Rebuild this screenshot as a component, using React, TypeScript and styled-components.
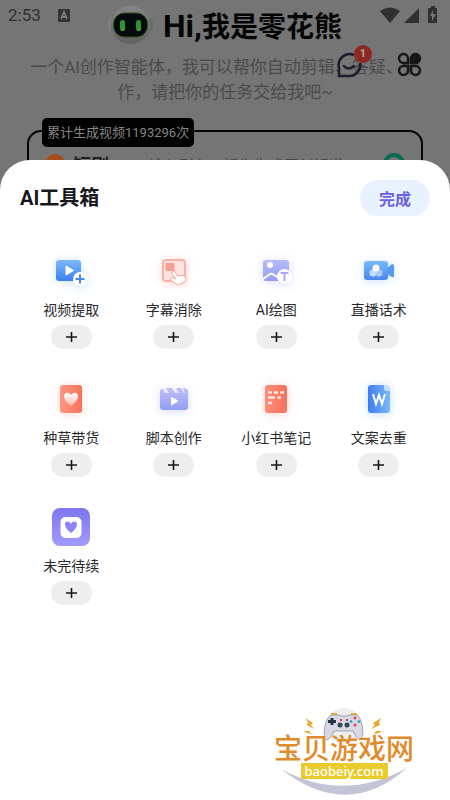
import React from 'react';
import styled, { createGlobalStyle } from 'styled-components';

const sans = '"Noto Sans CJK SC", sans-serif';
const latin = `Roboto, ${sans}`;

const GlobalStyle = createGlobalStyle`
  *, *::before, *::after { box-sizing: border-box; }
  body { margin: 0; background: #757575; font-family: ${latin}; }
  h1, h2, p, ul { margin: 0; padding: 0; }
  button { border: 0; padding: 0; font-family: inherit; cursor: pointer; }
  svg { display: block; overflow: visible; }
`;

const Screen = styled.div`
  position: relative;
  display: flex;
  flex-direction: column;
  min-height: 100vh;
  overflow: hidden;
`;

const Backdrop = styled.header`
  position: relative;
  height: 160px;
`;

const StatusBar = styled.div`
  position: absolute;
  inset: 0 8px auto 8px;
  display: flex;
  align-items: center;
  height: 30px;
  gap: 17px;
  color: #303030;
  font-size: 17px;
`;

const StatusIcons = styled.div`
  display: flex;
  align-items: center;
  gap: 4px;
  margin-left: auto;
`;

const Hero = styled.div`
  display: flex;
  justify-content: center;
  align-items: center;
  gap: 10px;
  height: 50px;
`;

const HeroTitle = styled.h1`
  color: #050505;
  font-family: ${sans};
  font-size: 28px;
  line-height: 40px;
  font-weight: 700;
`;

const HeroGreeting = styled.span`
  font-family: Roboto, sans-serif;
  font-size: 32px;
`;

const Intro = styled.p`
  padding: 5px 28px 0;
  color: #4b4b4b;
  font-size: 17px;
  line-height: 25px;
  text-align: center;
`;

const QuickActions = styled.nav`
  position: absolute;
  top: 50px;
  right: 27px;
  display: flex;
  gap: 33px;
`;

const QuickButton = styled.button`
  position: relative;
  width: 27px;
  height: 28px;
  background: none;
`;

const Badge = styled.span`
  position: absolute;
  top: -5px;
  right: -9px;
  width: 18px;
  height: 18px;
  border-radius: 50%;
  background: #8f2722;
  color: #aaa;
  font-size: 11px;
  line-height: 18px;
  font-weight: 700;
`;

const PromptCard = styled.section`
  margin: 25px 27px 0;
  height: 60px;
  border: 2px solid #050505;
  border-radius: 14px;
`;

const Counter = styled.span`
  display: block;
  width: fit-content;
  margin: -14px 0 0 13px;
  padding: 0 5px;
  border-radius: 5px;
  background: #020202;
  color: #858585;
  font-size: 13px;
  line-height: 29px;
`;

const PromptRow = styled.div`
  display: flex;
  align-items: center;
  height: 32px;
  margin: 1px 16px 0;
  color: #202020;
  font-size: 18px;
  font-weight: 700;
`;

const PromptHint = styled.span`
  margin: 0 auto;
  color: #484848;
  font-size: 15px;
  font-weight: 400;
`;

const PromptName = styled.span`
  margin-left: 8px;
`;

const Sheet = styled.main`
  position: relative;
  flex: 1;
  border-radius: 30px 30px 0 0;
  background: #fff;
`;

const SheetHeader = styled.div`
  display: flex;
  justify-content: space-between;
  align-items: center;
  padding: 20px 20px 0;
`;

const SheetTitle = styled.h2`
  color: #17171d;
  font-size: 20px;
  line-height: 28px;
  font-weight: 700;
`;

const DoneButton = styled.button`
  width: 70px;
  height: 36px;
  border-radius: 18px;
  background: #e8f2ff;
  color: #6a61dc;
  font-size: 16px;
  font-weight: 700;
`;

const ToolGrid = styled.ul`
  display: grid;
  grid-template-columns: repeat(4, 1fr);
  row-gap: 16px;
  padding: 33px 20px 0;
  list-style: none;
`;

const ToolItem = styled.li`
  display: flex;
  flex-direction: column;
  align-items: center;
  height: 112px;
`;

const ToolLabel = styled.span`
  margin-top: 5px;
  color: #29292c;
  font-size: 14px;
  line-height: 24px;
  white-space: nowrap;
`;

const AddButton = styled.button`
  display: grid;
  place-items: center;
  width: 41px;
  height: 24px;
  margin-top: 3px;
  border-radius: 12px;
  background: #eee;
`;

const Watermark = styled.aside`
  position: absolute;
  right: 34px;
  bottom: 0;
  width: 144px;
  height: 96px;
`;

const WatermarkArt = styled.svg`
  position: absolute;
  inset: 0;
`;

const WatermarkText = styled.div`
  position: relative;
  display: flex;
  flex-direction: column;
  align-items: center;
  padding-top: 27px;
`;

const WatermarkName = styled.span`
  color: #df8b2b;
  font-family: ${sans};
  font-size: 28px;
  line-height: 32px;
  font-weight: 500;
  white-space: nowrap;
  text-shadow: 0 0 2px #fff;
`;

const WatermarkSite = styled.span`
  padding: 0 4px;
  background: #e9cb2d;
  color: #fff;
  font-family: "Noto Sans", sans-serif;
  font-size: 13px;
  line-height: 16px;
  font-weight: 500;
`;

type Glow = { color: string };
const IconFrame = styled.svg<Glow>`
  filter: drop-shadow(0 1px 4px ${({ color }) => color});
`;

function ToolIcon({ glow, children }: { glow: string; children: React.ReactNode }) {
  return (
    <IconFrame color={glow} width="44" height="44" viewBox="0 0 44 44" fill="none" aria-hidden="true">
      {children}
    </IconFrame>
  );
}

function Gradient({ id, from, to, across = false }: { id: string; from: string; to: string; across?: boolean }) {
  return (
    <linearGradient id={id} x1="0" y1="0" x2={across ? 1 : 0} y2={across ? 0 : 1}>
      <stop stopColor={from} />
      <stop offset="1" stopColor={to} />
    </linearGradient>
  );
}

const heart = 'M22 29C18 26 15 23 15 19.500C15 15 20 14.500 22 18C24 14.500 29 15 29 19.500C29 23 26 26 22 29Z';

const tools = [
  {
    name: '视频提取', glow: '#a9d5ffb0', art: <>
      <Gradient id="extract" from="#7cb9fc" to="#3d7ff1" />
      <rect x="7" y="11" width="25" height="21" rx="3" fill="url(#extract)" />
      <path d="M17 17V26L24.500 21.500Z" fill="#fff" stroke="#fff" strokeLinejoin="round" />
      <circle cx="31" cy="30" r="7" fill="#fff" />
      <path d="M31 25.500V34.500M26.500 30H35.500" stroke="#438af0" strokeWidth="2" />
    </>,
  },
  {
    name: '字幕消除', glow: '#ffb5aa90', art: <>
      <rect x="11" y="11" width="22" height="21" rx="3" fill="#fde3df" stroke="#f7b3a9" strokeWidth="2" />
      <rect x="13.500" y="14" width="9" height="8" rx="1" fill="#f3a095" />
      <path d="M19 24L22 22L26 27L31 26.500C34.500 26.500 34.500 31 33 33L26 36L18 31C19 28 22 28.500 24 30L19.500 24Z" fill="#fff" stroke="#f4a195" strokeLinejoin="round" />
    </>,
  },
  {
    name: 'AI绘图', glow: '#c8c5ffa0', art: <>
      <Gradient id="drawing" from="#b7baf9" to="#969cf4" />
      <rect x="9" y="11" width="26" height="21" rx="3" fill="url(#drawing)" />
      <circle cx="16" cy="16" r="3" fill="#fff" />
      <path d="M9 30L16 25Q18 24 20 26L25 29" stroke="#fff" strokeWidth="2" />
      <circle cx="30.500" cy="27.500" r="7.500" fill="#fff" />
      <path d="M26.500 24H34.500M30.500 24V32" stroke="#a9abf7" strokeWidth="2" />
    </>,
  },
  {
    name: '直播话术', glow: '#a9d5ffb0', art: <>
      <Gradient id="live" from="#79bafc" to="#4c86ed" />
      <rect x="7" y="12" width="24" height="19" rx="3" fill="url(#live)" />
      <path d="M30 19L35 15Q37 15 37 17V27Q37 29 35 28L30 25Z" fill="#599af1" />
      <circle cx="16" cy="24" r="3.500" fill="#d1e6ff" opacity=".9" />
      <circle cx="22" cy="24" r="3.500" fill="#b2d1fc" opacity=".9" />
      <circle cx="19" cy="19" r="3.500" fill="#fff" />
    </>,
  },
  {
    name: '种草带货', glow: '#ffb5aa90', art: <>
      <Gradient id="goods" from="#ff9683" to="#f5725b" across />
      <Gradient id="heartFade" from="#fff" to="#ffb8aa" />
      <rect x="11" y="8" width="22" height="28" rx="3" fill="url(#goods)" />
      <path d={heart} fill="url(#heartFade)" />
    </>,
  },
  {
    name: '脚本创作', glow: '#c2c7ffb0', art: <>
      <Gradient id="script" from="#bdbff9" to="#939df3" />
      <path d="M8 14Q8 12 11 12L13 16H17L14 11H20L23 16H27L24 11H29L32 16H33L31 11Q36 11 36 15V30Q36 33 33 33H11Q8 33 8 30Z" fill="url(#script)" />
      <path d="M19.500 20.500V28L26 24Z" fill="#fff" stroke="#fff" strokeLinejoin="round" />
    </>,
  },
  {
    name: '小红书笔记', glow: '#ffb5aa90', art: <>
      <Gradient id="notes" from="#ff8b78" to="#f4735e" across />
      <rect x="11" y="8" width="22" height="28" rx="3" fill="url(#notes)" />
      <path d="M14 15.500H18M20 15.500H24M26 15.500H30M14 20.500H21M23.500 20.500H27M14 26H18" stroke="#ffe5df" strokeWidth="2.500" />
    </>,
  },
  {
    name: '文案去重', glow: '#9fd2ffb0', art: <>
      <Gradient id="document" from="#3f7df0" to="#7bb9fb" across />
      <path d="M14 8H27L33 14V33Q33 36 30 36H14Q11 36 11 33V11Q11 8 14 8Z" fill="url(#document)" />
      <path d="M27 8H30Q33 8 33 11V14H30Q27 14 27 11Z" fill="#c6e0ff" />
      <path d="M16 17L19 27L22 18L25 27L28 17" stroke="#fff" strokeWidth="2" />
    </>,
  },
  {
    name: '未完待续', glow: 'transparent', art: <>
      <Gradient id="continued" from="#7f75ef" to="#a29bfc" />
      <rect x="3" y="3" width="38" height="38" rx="8" fill="url(#continued)" />
      <rect x="11.500" y="12" width="21" height="21" rx="5" fill="#fff" />
      <path d="M22 28C18 25 16 22 16 19.500C16 16 20 15.500 22 19C24 15.500 28 16 28 19.500C28 22 26 25 22 28Z" fill="#8d84f5" />
    </>,
  },
];

function Robot() {
  return (
    <svg width="45" height="40" viewBox="0 0 45 40" aria-hidden="true">
      <Gradient id="shell" from="#858585" to="#626262" />
      <rect y="14" width="8" height="12" rx="4" fill="#808080" />
      <rect x="37" y="14" width="8" height="12" rx="4" fill="#696969" />
      <ellipse cx="22.500" cy="20" rx="20" ry="19" fill="url(#shell)" />
      <rect x="5.500" y="8" width="34" height="24" rx="11" fill="#030b0d" stroke="#35521b" />
      <rect x="12" y="15" width="5" height="11" rx="2.500" fill="#309233" />
      <rect x="28" y="15" width="5" height="11" rx="2.500" fill="#309233" />
      <path d="M13 24Q15 27 17 23M29 24Q31 27 33 23" stroke="#7e9b20" fill="none" />
    </svg>
  );
}

function StatusSymbols() {
  return (
    <StatusIcons>
      <svg width="20" height="16" viewBox="0 0 20 16" fill="#303030"><path d="M0 4Q10 -3 20 4L10 16Z" /></svg>
      <svg width="15" height="15" viewBox="0 0 15 15" fill="#303030"><path d="M15 0V15H0Z" /></svg>
      <svg width="19" height="18" viewBox="0 0 19 18" fill="#303030"><path d="M8 2V0H12V2H14V17H5V2Z" /><path d="M10 4L7 10H9V15L13 8H10Z" fill="#777" /></svg>
    </StatusIcons>
  );
}

export default function App() {
  return (
    <>
      <GlobalStyle />
      <Screen>
        <Backdrop>
          <StatusBar>
            <span>2:53</span>
            <svg width="12" height="13" viewBox="0 0 12 13"><rect width="12" height="13" rx="1" fill="#343434" /><path d="M3 10L6 3L9 10M4 8H8" fill="none" stroke="#888" strokeWidth="1.500" /></svg>
            <StatusSymbols />
          </StatusBar>
          <Hero><Robot /><HeroTitle><HeroGreeting>Hi,</HeroGreeting>我是零花熊</HeroTitle></Hero>
          <Intro>一个AI创作智能体，我可以帮你自动剪辑、答疑、创作，请把你的任务交给我吧~</Intro>
          <QuickActions>
            <QuickButton aria-label="消息">
              <svg width="27" height="28" viewBox="0 0 27 28" fill="none" stroke="#1d1c2b" strokeWidth="2.500"><path d="M18 5A11 11 0 0 0 3 18V26H13A11 11 0 0 0 24 13" /><path d="M8 16Q12 21 18 16" strokeLinecap="round" /></svg>
              <Badge>1</Badge>
            </QuickButton>
            <QuickButton aria-label="工具箱">
              <svg width="27" height="28" viewBox="0 0 27 28" fill="#757575" stroke="#171717" strokeWidth="2.500"><path d="M12 13V8A4.500 4.500 0 1 0 7 13ZM12 16H7A4.500 4.500 0 1 0 12 21ZM15 16H20A4.500 4.500 0 1 1 15 21Z" /><path d="M15 13V8A4.500 4.500 0 1 1 20 13Z" fill="#171717" /></svg>
            </QuickButton>
          </QuickActions>
          <PromptCard>
            <Counter>累计生成视频1193296次</Counter>
            <PromptRow>
              <svg width="20" height="20" viewBox="0 0 20 20"><circle cx="10" cy="10" r="10" fill="#a84b1d" /><path d="M7 5L14 10L7 15Z" fill="#777" /></svg>
              <PromptName>短剧</PromptName><PromptHint>输入剧名，抓先生成原创解说</PromptHint>
              <svg width="22" height="22" viewBox="0 0 22 22"><circle cx="11" cy="11" r="9" fill="none" stroke="#086b51" strokeWidth="4" /></svg>
            </PromptRow>
          </PromptCard>
        </Backdrop>
        <Sheet>
          <SheetHeader><SheetTitle>AI工具箱</SheetTitle><DoneButton>完成</DoneButton></SheetHeader>
          <ToolGrid>
            {tools.map(({ name, glow, art }) => (
              <ToolItem key={name}>
                <ToolIcon glow={glow}>{art}</ToolIcon>
                <ToolLabel>{name}</ToolLabel>
                <AddButton aria-label={`添加${name}`}>
                  <svg width="11" height="10" viewBox="0 0 11 10" stroke="#18181b" strokeWidth="1.600"><path d="M5.500 0V10M0 5H11" /></svg>
                </AddButton>
              </ToolItem>
            ))}
          </ToolGrid>
          <Watermark>
            <WatermarkArt width="144" height="96" viewBox="0 0 144 96" fill="none" aria-hidden="true">
              <circle cx="72" cy="22" r="18" fill="#eeeef0" />
              <path d="M60 11H66Q72 14 78 11H84Q90 12 91 30L89 36Q85 36 81 27H62Q58 36 54 36L52 30Q53 12 60 11Z" fill="#d8d8e4" stroke="#a4a5b4" />
              <path d="M59 10H65M79 10H85" stroke="#dbac48" strokeWidth="2" />
              <path d="M60 14V21M56 17.500H64" stroke="#273141" strokeWidth="3" />
              <circle cx="83" cy="14" r="1.500" fill="#db4354" /><circle cx="83" cy="21" r="1.500" fill="#db4354" />
              <circle cx="79" cy="17.500" r="1.500" fill="#36a4c7" /><circle cx="87" cy="17.500" r="1.500" fill="#36a4c7" />
              <circle cx="68" cy="21" r="2.500" fill="#334452" /><circle cx="75" cy="21" r="2.500" fill="#334452" />
              <path d="M68 16H70M74 16H76" stroke="#cf4264" strokeWidth="2" />
              <path d="M33 14L41 19L39 21L42 25L35 21L36 18ZM109 14L101 19L103 21L99 25L108 21L107 18ZM32 27L37 27L40 30L35 29ZM110 27L104 27L102 30L107 29Z" fill="#eba632" />
              <path d="M9 65Q71 99 135 64Q75 117 9 65Z" fill="#c4c4d7" />
            </WatermarkArt>
            <WatermarkText><WatermarkName>宝贝游戏网</WatermarkName><WatermarkSite>baobeiy.com</WatermarkSite></WatermarkText>
          </Watermark>
        </Sheet>
      </Screen>
    </>
  );
}
